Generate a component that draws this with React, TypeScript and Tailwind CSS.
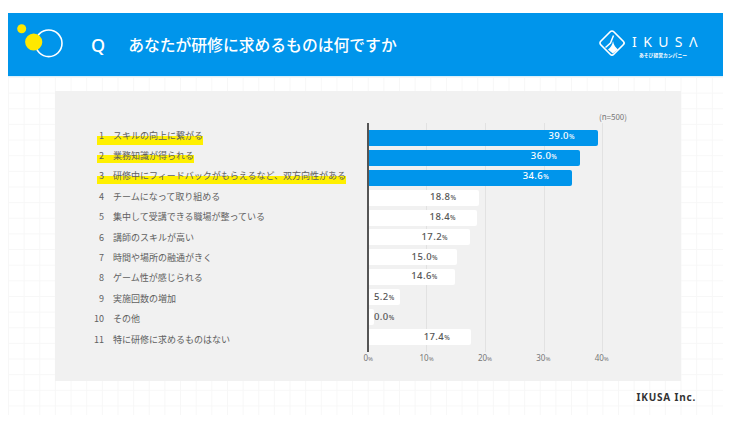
const rows: { n: number; label: string; pct: number; hl?: { w: string; top: string; h: string }; pad: number; blue?: boolean; left?: boolean }[] = [
  { n: 1, label: "スキルの向上に繋がる", pct: 39.0, blue: true, pad: 23, hl: { w: "w-[106px]", top: "top-[11px]", h: "h-[9px]" } },
  { n: 2, label: "業務知識が得られる", pct: 36.0, blue: true, pad: 23, hl: { w: "w-[97px]", top: "top-[10px]", h: "h-[8px]" } },
  { n: 3, label: "研修中にフィードバックがもらえるなど、双方向性がある", pct: 34.6, blue: true, pad: 23, hl: { w: "w-[249px]", top: "top-[10px]", h: "h-[8px]" } },
  { n: 4, label: "チームになって取り組める", pct: 18.8, pad: 23 },
  { n: 5, label: "集中して受講できる職場が整っている", pct: 18.4, pad: 21 },
  { n: 6, label: "講師のスキルが高い", pct: 17.2, pad: 22 },
  { n: 7, label: "時間や場所の融通がきく", pct: 15.0, pad: 19 },
  { n: 8, label: "ゲーム性が感じられる", pct: 14.6, pad: 17 },
  { n: 9, label: "実施回数の増加", pct: 5.2, pad: 0, left: true },
  { n: 10, label: "その他", pct: 0.0, pad: 0, left: true },
  { n: 11, label: "特に研修に求めるものはない", pct: 17.4, pad: 21 },
];

const ticks = ["0", "10", "20", "30", "40"];

export default function App() {
  return (
    <div className="w-[733px] h-[427px] bg-white pt-[13px] px-[8px] overflow-hidden font-['Noto_Sans_CJK_JP','Noto_Sans',sans-serif] text-[#606060]">
      <header className="h-[63px] w-[715px] bg-[#0095eb] flex items-center text-white relative">
        <svg width="60" height="63" viewBox="0 0 60 63" className="shrink-0">
          <circle cx="40.7" cy="30.3" r="13.3" fill="none" stroke="white" strokeWidth="1.6" />
          <circle cx="25.7" cy="29" r="8.6" fill="#ffe800" />
          <circle cx="13.7" cy="15.7" r="4.5" fill="#ffe800" />
        </svg>
        <span className="ml-[23px] text-[18px] leading-none font-medium font-['Noto_Sans',sans-serif]">Q</span>
        <h1 className="ml-[23px] text-[15.8px] leading-none font-medium whitespace-nowrap">あなたが研修に求めるものは何ですか</h1>
        <div className="ml-auto mr-[24px] flex items-center gap-[6px]">
          <svg width="28" height="28" viewBox="0 0 28 28" fill="none" stroke="white" className="shrink-0 mt-[-3px]">
            <rect x="4.8" y="4.8" width="18.4" height="18.4" rx="2.5" transform="rotate(45 14 14)" strokeWidth="1.7" />
            <path d="M15.5 6.5 L12.5 14 L7.5 18.5" strokeWidth="1.5" />
            <path d="M15 12 C15.5 16 18 19 20 20.5 L14.8 24.5 L10 20.5 C12.5 18.5 14.5 16 15 12 Z" fill="white" stroke="none" />
          </svg>
          <div className="flex flex-col items-center mt-[1px]">
            <span className="w-[67px] text-[14px] leading-[18px] tracking-[6.4px] font-normal whitespace-nowrap font-['Noto_Sans',sans-serif]">IKUSΛ</span>
            <span className="mr-[5px] text-[4.8px] leading-[7px] font-bold whitespace-nowrap">あそび経営カンパニー</span>
          </div>
        </div>
      </header>
      <main className="w-[715px] h-[339px] pt-[14px] pl-[47px] border-t border-[#d9f1fd] bg-[linear-gradient(#f7f7f7_1px,transparent_1px),linear-gradient(90deg,#f7f7f7_1px,transparent_1px)] bg-[size:15.65px_15.65px]">
        <section className="w-[626px] h-[290px] bg-[#f1f1f1] flex flex-col">
          <p className="h-[32px] pt-[21px] pr-[54px] text-right text-[8px] leading-[10px] text-[#777]">(n=500)</p>
          <div className="flex">
            <div className="w-[312px] shrink-0 pt-[2px] pl-[33px] text-[9px]">
              {rows.map((r) => (
                <div key={r.n} className="relative flex items-center h-[20.4px] leading-none whitespace-nowrap">
                  {r.hl && <span className={`absolute left-[9px] ${r.hl.top} ${r.hl.w} ${r.hl.h} bg-[#fff000]`} />}
                  <span className="relative w-[16px] text-right">{r.n}</span>
                  <span className="relative ml-[9px]">{r.label}</span>
                </div>
              ))}
            </div>
            <div className="relative w-[280px] h-[229px] border-l-2 border-[#555] pt-[5px]">
              <span className="absolute top-0 bottom-0 left-[57px] w-px bg-[#e2e2e2]" />
              <span className="absolute top-0 bottom-0 left-[116px] w-px bg-[#e2e2e2]" />
              <span className="absolute top-0 bottom-0 left-[175px] w-px bg-[#e2e2e2]" />
              <span className="absolute top-0 bottom-0 left-[233px] w-px bg-[#e2e2e2]" />
              {rows.map((r, i) => (
                <div key={r.n} className="relative flex items-center h-[19.9px]">
                  <div
                    className={`h-[16px] rounded-r-[2px] shrink-0 flex items-center ${r.left ? "justify-start pl-[5px]" : "justify-end"} ${r.blue ? "bg-[#0095eb] text-white" : "bg-white text-[#555]"}`}
                    style={{ width: r.pct * 5.87, paddingRight: r.pad }}
                  >
                    <span
                      className="text-[9.5px] leading-none font-medium tracking-[0.4px] whitespace-nowrap font-['Noto_Sans',sans-serif]"
                      style={{ transform: `translateY(${-2 + 0.2 * i}px)` }}
                    >
                      {r.pct.toFixed(1)}
                      <span className="text-[6.5px]">%</span>
                    </span>
                  </div>
                </div>
              ))}
            </div>
          </div>
          <div className="flex ml-[284px] mt-[1px]">
            {ticks.map((t) => (
              <span key={t} className="w-[58.4px] text-center text-[8px] leading-[10px] text-[#777] font-['Noto_Sans',sans-serif]">
                {t}
                <span className="text-[6px]">%</span>
              </span>
            ))}
          </div>
        </section>
        <p className="mt-[9px] w-[641px] text-right text-[10px] leading-[14px] font-bold tracking-[0.8px] text-[#333] font-['Noto_Sans',sans-serif]">IKUSA Inc.</p>
      </main>
    </div>
  );
}
